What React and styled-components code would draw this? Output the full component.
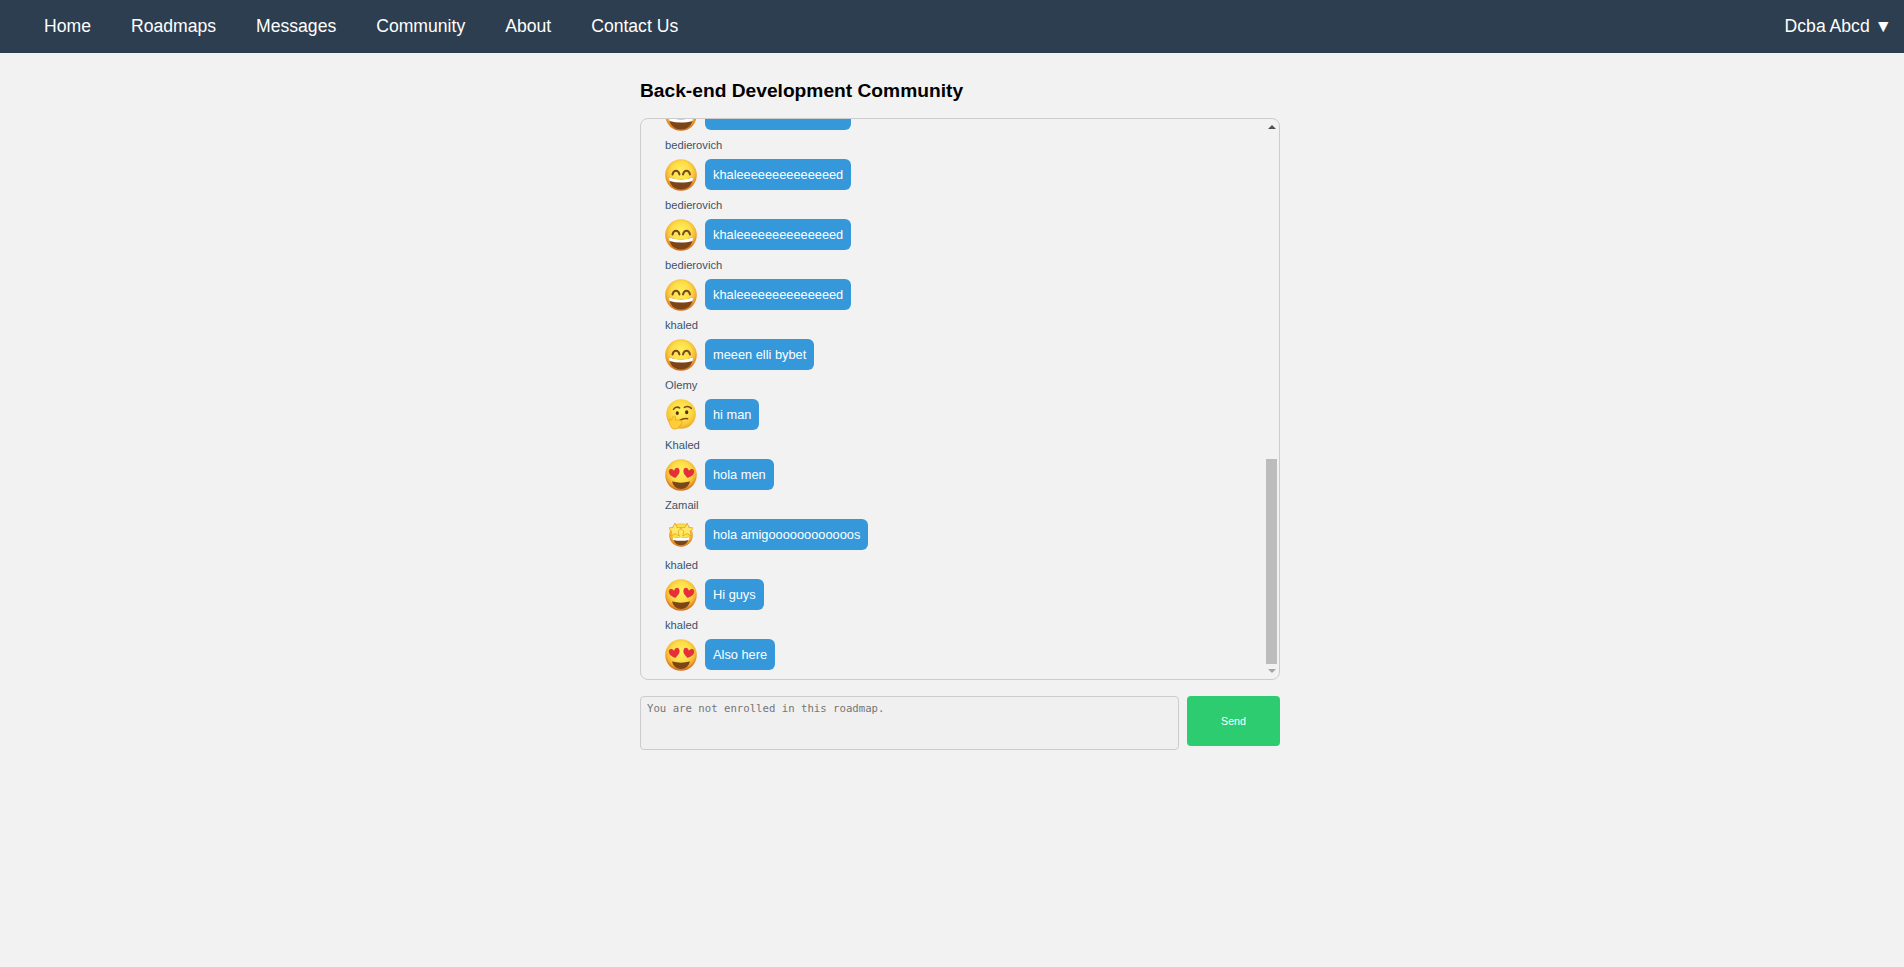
import React, { useId, useLayoutEffect, useRef, useState } from "react";
import styled, { createGlobalStyle } from "styled-components";

const Global = createGlobalStyle`
  html, body { margin: 0; padding: 0; height: 100%; background: #f2f2f2; overflow: hidden; }
  body { font-family: "Liberation Sans", Arial, sans-serif; }
`;

const Nav = styled.nav`
  height: 53px;
  background: #2c3e50;
  display: flex;
  align-items: center;
  justify-content: space-between;
  padding: 0 12px 0 24px;
`;
const NavLinks = styled.div`
  display: flex;
`;
const NavLink = styled.a`
  color: #fff;
  font-size: 17.6px;
  padding: 0 20px;
`;
const UserMenu = styled.div`
  color: #fff;
  font-size: 17.6px;
  white-space: pre;
`;
const Page = styled.main`
  display: flex;
  justify-content: center;
  padding: 0 0 0 16px;
`;
const Column = styled.div`
  width: 640px;
`;
const Title = styled.h2`
  margin: 26px 0 15px;
  font-size: 19.2px;
  line-height: 24px;
  font-weight: 700;
  color: #000;
`;
const ChatFrame = styled.div`
  position: relative;
  height: 562px;
`;
const ChatBox = styled.div`
  box-sizing: border-box;
  height: 100%;
  border: 1px solid #ccc;
  border-radius: 8px;
  overflow-y: scroll;
  scrollbar-width: none;
  padding: 7px 24px 0;
  &::-webkit-scrollbar { display: none; }
`;
const Rail = styled.div`
  position: absolute;
  top: 1px;
  right: 1px;
  bottom: 1px;
  width: 15px;
  display: flex;
  flex-direction: column;
`;
const RailButton = styled.div`
  flex: none;
  height: 15px;
  display: flex;
  justify-content: center;
  align-items: ${(p) => (p.$down ? "flex-start" : "flex-end")};
  padding: ${(p) => (p.$down ? "5px" : "0")} 0 ${(p) => (p.$down ? "0" : "5px")};
  box-sizing: border-box;
  &::before {
    content: "";
    width: 0;
    height: 0;
    border-left: 4px solid transparent;
    border-right: 4px solid transparent;
    ${(p) =>
      p.$down
        ? "border-top: 4px solid #a3a3a3;"
        : "border-bottom: 4px solid #505050;"}
  }
`;
const RailTrack = styled.div`
  flex: 1;
  position: relative;
`;
const Thumb = styled.div`
  position: absolute;
  left: 2px;
  right: 2px;
  background: #bcbcbc;
`;
const Message = styled.div`
  margin-bottom: 8px;
`;
const Sender = styled.div`
  font-size: 11.2px;
  line-height: 13px;
  margin-bottom: 7px;
  color: #3d5268;
`;
const Line = styled.div`
  display: flex;
  align-items: flex-start;
  gap: 8px;
`;
const AvatarSlot = styled.div`
  width: 32px;
  height: 32px;
  flex: none;
  display: flex;
  align-items: center;
  justify-content: center;
`;
const Bubble = styled.div`
  background: #3498db;
  color: #fff;
  font-size: 12.8px;
  line-height: 15px;
  padding: 8px;
  border-radius: 6px;
`;
const Composer = styled.div`
  display: flex;
  align-items: flex-start;
  gap: 8px;
  margin-top: 16px;
`;
const Input = styled.textarea`
  box-sizing: border-box;
  flex: 1;
  height: 54px;
  padding: 5px 6px;
  border: 1px solid #ccc;
  border-radius: 4px;
  background: #f0f0f0;
  font-family: "DejaVu Sans Mono", monospace;
  font-size: 10.67px;
  line-height: 13px;
  resize: none;
  outline: none;
  &::placeholder { color: #757575; opacity: 1; }
`;
const SendButton = styled.button`
  width: 93px;
  height: 50px;
  border: 0;
  border-radius: 4px;
  background: #2ecc71;
  color: #fff;
  font-family: "Liberation Sans", Arial, sans-serif;
  font-size: 10.67px;
`;

const Face = ({ id, pale }) => (
  <>
    <defs>
      <radialGradient id={id} cx="50%" cy="40%" r="58%">
        <stop offset="0%" stopColor="#fff25e" />
        <stop offset="55%" stopColor="#fcdc48" />
        <stop offset="80%" stopColor={pale ? "#f8c835" : "#f5b432"} />
        <stop offset="100%" stopColor={pale ? "#eeaa28" : "#d6701a"} />
      </radialGradient>
    </defs>
    <circle cx="32" cy="32" r="31.5" fill={`url(#${id})`} />
  </>
);

const Heart = ({ x, y, flip }) => (
  <path
    transform={`translate(${x} ${y}) rotate(${flip ? 10 : -10}) scale(0.72)`}
    d="M0-6C-4-16-15-15-15-5-15 4-7 9 0 14 7 9 15 4 15-5 15-15 4-16 0-6Z"
    fill="#e5303a"
  />
);

const Grin = () => {
  const id = useId().replace(/:/g, "");
  return (
    <svg width="32" height="32" viewBox="0 0 64 64">
      <Face id={id} />
      <path d="M15 31c2-10 12-10 14 0M36 31c2-10 12-10 14 0" fill="none" stroke="#7a4a1e" strokeWidth="4" strokeLinecap="round" />
      <path d="M8 37c16 5 32 5 48 0 0 14-10 24-24 24S8 51 8 37Z" fill="#7b4518" />
      <path d="M8 37c16 5 32 5 48 0 0 3-.4 5-1 7-15 4-31 4-46 0-.6-2-1-4-1-7Z" fill="#fff" />
    </svg>
  );
};

const Love = () => {
  const id = useId().replace(/:/g, "");
  return (
    <svg width="32" height="32" viewBox="0 0 64 64">
      <Face id={id} />
      <Heart x={19} y={28} />
      <Heart x={47} y={28} flip />
      <path d="M14 45c12 3 24 3 36 0-2 9-9 15-18 15s-16-6-18-15Z" fill="#7b4518" />
    </svg>
  );
};

const Thinking = () => {
  const id = useId().replace(/:/g, "");
  return (
    <svg width="32" height="32" viewBox="0 0 64 64">
      <g transform="translate(2 0) scale(0.94)">
        <Face id={id} pale />
        <path d="M16 22c3-5 9-6 13-3M39 18c5-3 11-2 15 2" fill="none" stroke="#7a4a1e" strokeWidth="3.2" strokeLinecap="round" />
        <ellipse cx="24" cy="30" rx="3.4" ry="4.2" fill="#4f3216" />
        <ellipse cx="44" cy="28" rx="3.4" ry="4.2" fill="#4f3216" />
        <path d="M30 45c5-3 11-4 16-3" fill="none" stroke="#7a4a1e" strokeWidth="3.2" strokeLinecap="round" />
        <path d="M6 44c2-2 4-1 6 2 1-6 3-10 6-10 3 1 2 5 2 9 5-1 12 0 14 2 2 2 0 4-2 4 2 2 1 4-2 4 1 3-1 4-3 4 0 3-4 5-9 5-7 0-10-8-12-20Z" fill="#fece38" stroke="#e99f20" strokeWidth="1.6" />
      </g>
    </svg>
  );
};

const Star = ({ x, y }) => (
  <path
    transform={`translate(${x} ${y}) scale(1.2)`}
    d="M0-15 4.5-5 15-4 7 3.5 9.5 14 0 8.5-9.5 14-7 3.5-15-4-4.5-5Z"
    fill="#ffe868"
    stroke="#e0981f"
    strokeWidth="1.6"
    strokeLinejoin="round"
  />
);

const StarStruck = () => {
  const id = useId().replace(/:/g, "");
  return (
    <svg width="24" height="24" viewBox="0 0 64 64">
      <Face id={id} />
      <path d="M10 37c14 4 30 4 44 0-1 13-10 22-22 22S11 50 10 37Z" fill="#7b4518" />
      <path d="M10 37c14 4 30 4 44 0l-1 8c-13 3-29 3-42 0Z" fill="#fff" />
      <Star x={16} y={18} />
      <Star x={48} y={18} />
    </svg>
  );
};

const FACES = { grin: Grin, love: Love, thinking: Thinking, star: StarStruck };

const khaled = { sender: "bedierovich", text: "khaleeeeeeeeeeeeeed", face: "grin" };
const MESSAGES = [
  ...Array.from({ length: 18 }, () => khaled),
  { sender: "khaled", text: "meeen elli bybet", face: "grin" },
  { sender: "Olemy", text: "hi man", face: "thinking" },
  { sender: "Khaled", text: "hola men", face: "love" },
  { sender: "Zamail", text: "hola amigoooooooooooos", face: "star" },
  { sender: "khaled", text: "Hi guys", face: "love" },
  { sender: "khaled", text: "Also here", face: "love" },
];
const NAV_ITEMS = ["Home", "Roadmaps", "Messages", "Community", "About", "Contact Us"];
const TRACK = 530;

export default function App() {
  const box = useRef(null);
  const [thumb, setThumb] = useState({ top: 0, height: 0 });
  const syncThumb = () => {
    const { scrollTop, scrollHeight, clientHeight } = box.current;
    setThumb({
      top: (scrollTop / scrollHeight) * TRACK,
      height: (clientHeight / scrollHeight) * TRACK,
    });
  };
  useLayoutEffect(() => {
    box.current.scrollTop = box.current.scrollHeight;
    syncThumb();
  }, []);
  return (
    <>
      <Global />
      <Nav>
        <NavLinks>
          {NAV_ITEMS.map((item) => (
            <NavLink key={item}>{item}</NavLink>
          ))}
        </NavLinks>
        <UserMenu>Dcba Abcd ▼</UserMenu>
      </Nav>
      <Page>
        <Column>
          <Title>Back-end Development Community</Title>
          <ChatFrame>
            <ChatBox ref={box} onScroll={syncThumb}>
              {MESSAGES.map((m, i) => {
                const Avatar = FACES[m.face];
                return (
                  <Message key={i}>
                    <Sender>{m.sender}</Sender>
                    <Line>
                      <AvatarSlot>
                        <Avatar />
                      </AvatarSlot>
                      <Bubble>{m.text}</Bubble>
                    </Line>
                  </Message>
                );
              })}
            </ChatBox>
            <Rail aria-hidden="true">
              <RailButton />
              <RailTrack>
                <Thumb style={{ top: thumb.top, height: thumb.height }} />
              </RailTrack>
              <RailButton $down />
            </Rail>
          </ChatFrame>
          <Composer>
            <Input placeholder="You are not enrolled in this roadmap." disabled />
            <SendButton>Send</SendButton>
          </Composer>
        </Column>
      </Page>
    </>
  );
}
